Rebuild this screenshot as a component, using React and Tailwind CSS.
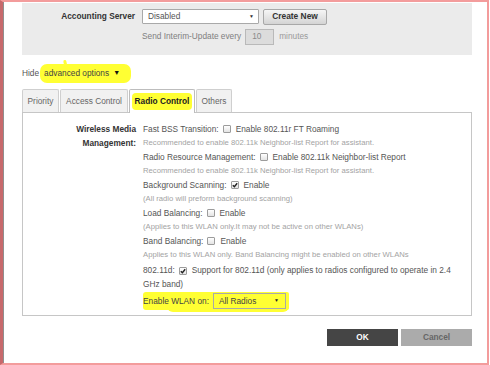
import React from "react";

const Check = ({ checked }) => (
  <span className="ml-[4px] mr-[5px] inline-flex h-[8px] w-[8px] shrink-0 items-center justify-center rounded-[1px] border border-[#9c9c9c] bg-gradient-to-b from-white to-[#e4e4e4] align-middle">
    {checked && (
      <svg width="6" height="6" viewBox="0 0 6 6">
        <path d="M0.8 3.2 L2.4 4.8 L5.2 1.2" fill="none" stroke="#222" strokeWidth="1.4" />
      </svg>
    )}
  </span>
);

const Note = ({ children }) => (
  <div className="flex h-[14px] items-center whitespace-nowrap text-[7.7px] text-[#a3a3a3]">{children}</div>
);

const Line = ({ children }) => (
  <div className="flex h-[14px] items-center whitespace-nowrap text-[8.3px] text-[#555]">{children}</div>
);

const tabs = [
  { name: "Priority", w: "w-[37px]" },
  { name: "Access Control", w: "w-[68px]" },
  { name: "Radio Control", w: "w-[66px]" },
  { name: "Others", w: "w-[36px]" },
];

export default function App() {
  return (
    <div className="h-[365px] w-[490px] overflow-hidden bg-white font-['Liberation_Sans',Arial,sans-serif]">
      <div className="h-[365px] w-[489px] border-t-2 border-r-2 border-b-2 border-l-[3px] border-t-[#f39c9c] border-r-[#f39c9c] border-b-[#f39c9c] border-l-[#c7696c] pl-[19px] shadow-[inset_1px_0_0_#8f8f8f]">
        {/* accounting panel */}
        <div className="mt-px h-[52px] w-[450px] bg-[#ebebeb] pt-[5px]">
          <div className="flex h-[17px] items-center">
            <div className="w-[114px] pr-px text-right text-[8.3px] font-bold text-[#333]">Accounting Server</div>
            <div className="ml-[6px] flex h-[15px] w-[117px] items-center justify-between rounded-[1px] border border-[#a9a9a9] bg-white pl-[5px] pr-[4px] text-[8.3px] text-[#555]">
              <span>Disabled</span>
              <span className="text-[5px] text-[#333]">▼</span>
            </div>
            <div className="ml-[4px] flex h-[16px] w-[64px] items-center justify-center rounded-[2px] border border-[#a8a8a8] bg-gradient-to-b from-[#f6f6f6] to-[#d4d4d4] text-[8.4px] font-bold text-[#333]">
              Create New
            </div>
          </div>
          <div className="mt-[3px] flex h-[17px] items-center pl-[120px] text-[8.3px] text-[#808080]">
            <span>Send Interim-Update every</span>
            <div className="ml-[4px] flex h-[16px] w-[29px] items-center border border-[#b9b9b9] bg-[#dcdcdc] pl-[6px] text-[#8a8a8a]">10</div>
            <span className="ml-[5px] text-[#9a9a9a]">minutes</span>
          </div>
        </div>

        {/* advanced options toggle */}
        <div className="mt-[11px] flex h-[14px] items-center text-[8.3px] text-[#555]">
          <span className="pr-[1px]">Hide</span>
          <span className="relative flex h-[19px] w-[91px] items-center rounded-[7px] bg-[#ffff33] pl-[4px] text-[#444]">
            <span className="absolute left-[24px] top-[-4px] h-[9px] w-[3px] -rotate-12 rounded bg-[#ffff33]"></span>
            <span className="relative">advanced options</span>
            <span className="relative ml-[4px] text-[7px] text-[#111]">▼</span>
          </span>
        </div>

        {/* tabs */}
        <div className="mt-[9px] flex h-[23px] items-end gap-px">
          {tabs.map((t) => {
            const active = t.name === "Radio Control";
            return (
              <div
                key={t.name}
                className={
                  active
                    ? "relative -mb-px flex h-[24px] w-[66px] items-center justify-center rounded-t-[2px] border border-b-0 border-[#bdbdbd] bg-white text-[8.3px]"
                    : "flex h-[23px] items-center justify-center rounded-t-[2px] border border-b-0 border-[#cfcfcf] bg-[#f1f1f1] text-[8.3px] text-[#666] " + t.w
                }
              >
                {active ? (
                  <span className="rounded-[4px] bg-[#ffff33] px-[3px] py-[2px] font-bold text-[#222]">{t.name}</span>
                ) : (
                  t.name
                )}
              </div>
            );
          })}
        </div>

        {/* tab content */}
        <div className="flex h-[204px] w-[450px] border border-[#c6c6c6] bg-white pt-[9px]">
          <div className="w-[114px] pr-px text-right text-[8.3px] font-bold leading-[14px] text-[#333]">
            Wireless Media
            <br />
            Management:
          </div>
          <div className="ml-[6px] w-[318px]">
            <Line>
              Fast BSS Transition:
              <Check />
              Enable 802.11r FT Roaming
            </Line>
            <Note>Recommended to enable 802.11k Neighbor-list Report for assistant.</Note>
            <Line>
              Radio Resource Management:
              <Check />
              Enable 802.11k Neighbor-list Report
            </Line>
            <Note>Recommended to enable 802.11k Neighbor-list Report for assistant.</Note>
            <Line>
              Background Scanning:
              <Check checked />
              Enable
            </Line>
            <Note>(All radio will preform background scanning)</Note>
            <Line>
              Load Balancing:
              <Check />
              Enable
            </Line>
            <Note>(Applies to this WLAN only.It may not be active on other WLANs)</Note>
            <Line>
              Band Balancing:
              <Check />
              Enable
            </Line>
            <Note>Applies to this WLAN only. Band Balancing might be enabled on other WLANs</Note>
            <div className="pt-px text-[8.3px] leading-[14px] text-[#555]">
              802.11d:
              <Check checked />
              Support for 802.11d (only applies to radios configured to operate in 2.4 GHz band)
            </div>
            <div className="relative mt-[1px] flex h-[18px] w-[146px] items-center rounded-l-[3px] rounded-r-[2px] bg-[#ffff33] text-[8.3px] text-[#444]">
              <span className="absolute left-[24px] top-[12px] h-[8px] w-[122px] rounded-b-[6px] bg-[#ffff33]"></span>
              <span className="relative whitespace-nowrap">Enable WLAN on:</span>
              <div className="relative ml-[4px] flex h-[16px] w-[73px] items-center justify-between border border-[#a9a9a9] bg-[#ffff33] pl-[5px] pr-[6px]">
                <span>All Radios</span>
                <span className="text-[5px] text-[#222]">▼</span>
              </div>
            </div>
          </div>
        </div>

        {/* buttons */}
        <div className="mt-[13px] flex w-[450px] justify-end gap-[3px]">
          <div className="flex h-[17px] w-[71px] items-center justify-center bg-[#454545] text-[8.3px] font-bold text-white">OK</div>
          <div className="flex h-[17px] w-[71px] items-center justify-center bg-[#ababab] text-[8.3px] font-bold text-[#666]">Cancel</div>
        </div>
      </div>
    </div>
  );
}
